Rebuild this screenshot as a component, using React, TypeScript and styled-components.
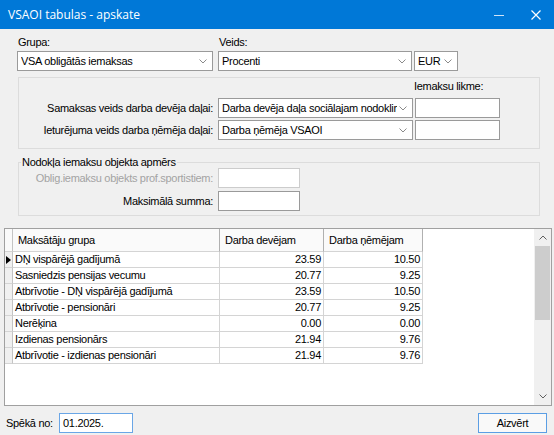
import React from "react";
import styled, { createGlobalStyle } from "styled-components";

const rows = [
  { name: "DŅ vispārējā gadījumā", employer: "23.59", employee: "10.50" },
  { name: "Sasniedzis pensijas vecumu", employer: "20.77", employee: "9.25" },
  { name: "Atbrīvotie - DŅ vispārējā gadījumā", employer: "23.59", employee: "10.50" },
  { name: "Atbrīvotie - pensionāri", employer: "20.77", employee: "9.25" },
  { name: "Nerēķina", employer: "0.00", employee: "0.00" },
  { name: "Izdienas pensionārs", employer: "21.94", employee: "9.76" },
  { name: "Atbrīvotie - izdienas pensionāri", employer: "21.94", employee: "9.76" },
];

function Chevron({ up }: { up?: boolean }) {
  return (
    <svg width="8" height="5" viewBox="0 0 8 5">
      <path
        d={up ? "M0.5 4.5 L4 1 L7.5 4.5" : "M0.5 0.5 L4 4 L7.5 0.5"}
        fill="none"
        stroke="currentColor"
        strokeWidth="1"
      />
    </svg>
  );
}

function Combo({ value }: { value: string }) {
  return (
    <ComboBox>
      <ComboText>{value}</ComboText>
      <ComboArrow>
        <Chevron />
      </ComboArrow>
    </ComboBox>
  );
}

function App() {
  return (
    <>
      <GlobalStyle />
      <Window>
        <TitleBar>
          <Title>VSAOI tabulas - apskate</Title>
          <WinButton>
            <svg width="10" height="10" viewBox="0 0 10 10">
              <path d="M0 5.5 H10" stroke="#cfe3f7" strokeWidth="1" />
            </svg>
          </WinButton>
          <WinButton>
            <svg width="10" height="10" viewBox="0 0 10 10">
              <path d="M0.5 0.5 L9.5 9.5 M9.5 0.5 L0.5 9.5" stroke="#fff" strokeWidth="1.2" />
            </svg>
          </WinButton>
        </TitleBar>

        <Body>
          <TopRow>
            <Field $width={196} $after={5}>
              <Label>Grupa:</Label>
              <Combo value="VSA obligātās iemaksas" />
            </Field>
            <Field $width={194} $after={2}>
              <Label>Veids:</Label>
              <Combo value="Procenti" />
            </Field>
            <Field $width={44} $after={0}>
              <Label>&nbsp;</Label>
              <Combo value="EUR" />
            </Field>
          </TopRow>

          <RateBox>
            <span />
            <span />
            <TopLabel>Iemaksu likme:</TopLabel>

            <RowLabel>Samaksas veids darba devēja daļai:</RowLabel>
            <Combo value="Darba devēja daļa sociālajam nodoklim" />
            <TextInput />

            <RowLabel>Ieturējuma veids darba ņēmēja daļai:</RowLabel>
            <Combo value="Darba ņēmēja VSAOI" />
            <TextInput />
          </RateBox>

          <Group>
            <Legend>Nodokļa iemaksu objekta apmērs</Legend>
            <GroupGrid>
              <RowLabel $disabled>Oblig.iemaksu objekts prof.sportistiem:</RowLabel>
              <TextInput $disabled />
              <RowLabel>Maksimālā summa:</RowLabel>
              <TextInput />
            </GroupGrid>
          </Group>

          <DataGrid>
            <Table>
              <RowHead $header />
              <HeadCell>Maksātāju grupa</HeadCell>
              <HeadCell>Darba devējam</HeadCell>
              <HeadCell>Darba ņēmējam</HeadCell>
              {rows.map((r, i) => (
                <React.Fragment key={r.name}>
                  <RowHead>{i === 0 && <Pointer />}</RowHead>
                  <Cell>{r.name}</Cell>
                  <Cell $num>{r.employer}</Cell>
                  <Cell $num>{r.employee}</Cell>
                </React.Fragment>
              ))}
            </Table>
            <ScrollBar>
              <ScrollArrow>
                <Chevron up />
              </ScrollArrow>
              <ScrollTrack>
                <ScrollThumb />
              </ScrollTrack>
              <ScrollArrow>
                <Chevron />
              </ScrollArrow>
            </ScrollBar>
          </DataGrid>

          <BottomBar>
            <DateGroup>
              <DateLabel>Spēkā no:</DateLabel>
              <DateInput>01.2025.</DateInput>
            </DateGroup>
            <Button>Aizvērt</Button>
          </BottomBar>
        </Body>
      </Window>
    </>
  );
}

const GlobalStyle = createGlobalStyle`
  html, body {
    margin: 0;
    padding: 0;
    background: #f0f0f0;
  }
  body {
    font-family: "Liberation Sans", Arial, sans-serif;
    font-size: 11px;
    letter-spacing: -0.3px;
    color: #000;
  }
  * {
    box-sizing: border-box;
  }
`;

const Window = styled.div`
  width: 554px;
  height: 435px;
  display: flex;
  flex-direction: column;
  background: #f0f0f0;
  overflow: hidden;
`;

const TitleBar = styled.div`
  height: 29px;
  flex-shrink: 0;
  display: flex;
  align-items: center;
  padding-left: 8px;
  background: #0078d7;
  color: #fff;
  font-family: "Open Sans", sans-serif;
  font-size: 12px;
  letter-spacing: 0;
`;

const Title = styled.div`
  flex: 1;
`;

const WinButton = styled.div`
  width: 37px;
  height: 29px;
  display: flex;
  align-items: center;
  justify-content: center;
`;

const Body = styled.div`
  flex: 1;
  display: flex;
  flex-direction: column;
`;

const TopRow = styled.div`
  display: flex;
  padding: 7px 0 0 17px;
`;

const Field = styled.div<{ $width: number; $after: number }>`
  width: ${(p) => p.$width}px;
  margin-right: ${(p) => p.$after}px;
  display: flex;
  flex-direction: column;
`;

const Label = styled.div`
  height: 13px;
  line-height: 13px;
  margin-bottom: 2px;
  padding-left: 1px;
`;

const ComboBox = styled.div`
  height: 20px;
  display: flex;
  align-items: center;
  padding: 0 5px 0 3px;
  background: #fff;
  border: 1px solid #9a9a9a;
`;

const ComboText = styled.div`
  flex: 1;
  overflow: hidden;
  white-space: nowrap;
`;

const ComboArrow = styled.div`
  display: flex;
  color: #8a8a8a;
  padding-left: 2px;
`;

const RateBox = styled.div`
  margin: 6px 14px 0 18px;
  border: 1px solid #dcdcdc;
  padding: 0 0 8px 0;
  display: grid;
  grid-template-columns: 199px 195px 87px;
  grid-template-rows: 18px 20px 20px;
  row-gap: 2px;
`;

const TopLabel = styled.div`
  padding: 2px 0 0 1px;
  line-height: 13px;
`;

const RowLabel = styled.div<{ $disabled?: boolean }>`
  text-align: right;
  padding-right: 5px;
  line-height: 20px;
  white-space: nowrap;
  color: ${(p) => (p.$disabled ? "#a3a3a3" : "#000")};
`;

const TextInput = styled.div<{ $disabled?: boolean }>`
  height: 20px;
  margin-left: 2px;
  background: #fff;
  border: 1px solid ${(p) => (p.$disabled ? "#cccccc" : "#9a9a9a")};
`;

const Group = styled.fieldset`
  margin: 8px 14px 0 18px;
  padding: 0 0 4px 0;
  border: 1px solid #dcdcdc;
  min-width: 0;
`;

const Legend = styled.legend`
  margin-left: 2px;
  padding: 0 1px;
  line-height: 11px;
`;

const GroupGrid = styled.div`
  display: grid;
  grid-template-columns: 199px 82px;
  grid-auto-rows: 20px;
  row-gap: 3px;

  ${TextInput} {
    margin-left: 0;
  }
`;

const DataGrid = styled.div`
  margin: 12px 2px 0 4px;
  height: 178px;
  display: flex;
  background: #fff;
  border: 1px solid #a0a0a0;
`;

const Table = styled.div`
  flex: 1;
  display: grid;
  grid-template-columns: 8px 207px 104px 99px;
  grid-template-rows: 23px;
  grid-auto-rows: 16px;
  align-content: start;
`;

const RowHead = styled.div<{ $header?: boolean }>`
  display: flex;
  align-items: center;
  background: ${(p) => (p.$header ? "#fafafa" : "#f0f0f0")};
  border-right: 1px solid #c4c4c4;
  border-bottom: 1px solid #d4d4d4;
`;

const Pointer = styled.span`
  width: 0;
  height: 0;
  margin-left: 1px;
  border-top: 4px solid transparent;
  border-bottom: 4px solid transparent;
  border-left: 5px solid #000;
`;

const HeadCell = styled.div`
  padding-left: 5px;
  line-height: 22px;
  white-space: nowrap;
  background: #fafafa;
  border-right: 1px solid #b0b0b0;
  border-bottom: 1px solid #d4d4d4;
`;

const Cell = styled.div<{ $num?: boolean }>`
  padding: 0 2px;
  line-height: 15px;
  white-space: nowrap;
  overflow: hidden;
  text-align: ${(p) => (p.$num ? "right" : "left")};
  border-right: 1px solid #d4d4d4;
  border-bottom: 1px solid #d4d4d4;
`;

const ScrollBar = styled.div`
  width: 17px;
  display: flex;
  flex-direction: column;
  background: #f0f0f0;
`;

const ScrollArrow = styled.div`
  height: 17px;
  display: flex;
  align-items: center;
  justify-content: center;
  color: #606060;
`;

const ScrollTrack = styled.div`
  flex: 1;
  padding: 0 1px;
`;

const ScrollThumb = styled.div`
  height: 74px;
  background: #cdcdcd;
`;

const BottomBar = styled.div`
  flex: 1;
  display: flex;
  align-items: flex-start;
  justify-content: space-between;
  padding: 7px 7px 0 6px;
`;

const DateGroup = styled.div`
  display: flex;
  align-items: center;
`;

const DateLabel = styled.div`
  width: 53px;
`;

const DateInput = styled.div`
  width: 74px;
  height: 20px;
  line-height: 18px;
  padding-left: 3px;
  background: #fff;
  border: 1px solid #6aa6e6;
`;

const Button = styled.div`
  width: 69px;
  height: 20px;
  display: flex;
  align-items: center;
  justify-content: center;
  background: #f9f9f9;
  border: 1px solid #5b9ee4;
`;

export default App;
